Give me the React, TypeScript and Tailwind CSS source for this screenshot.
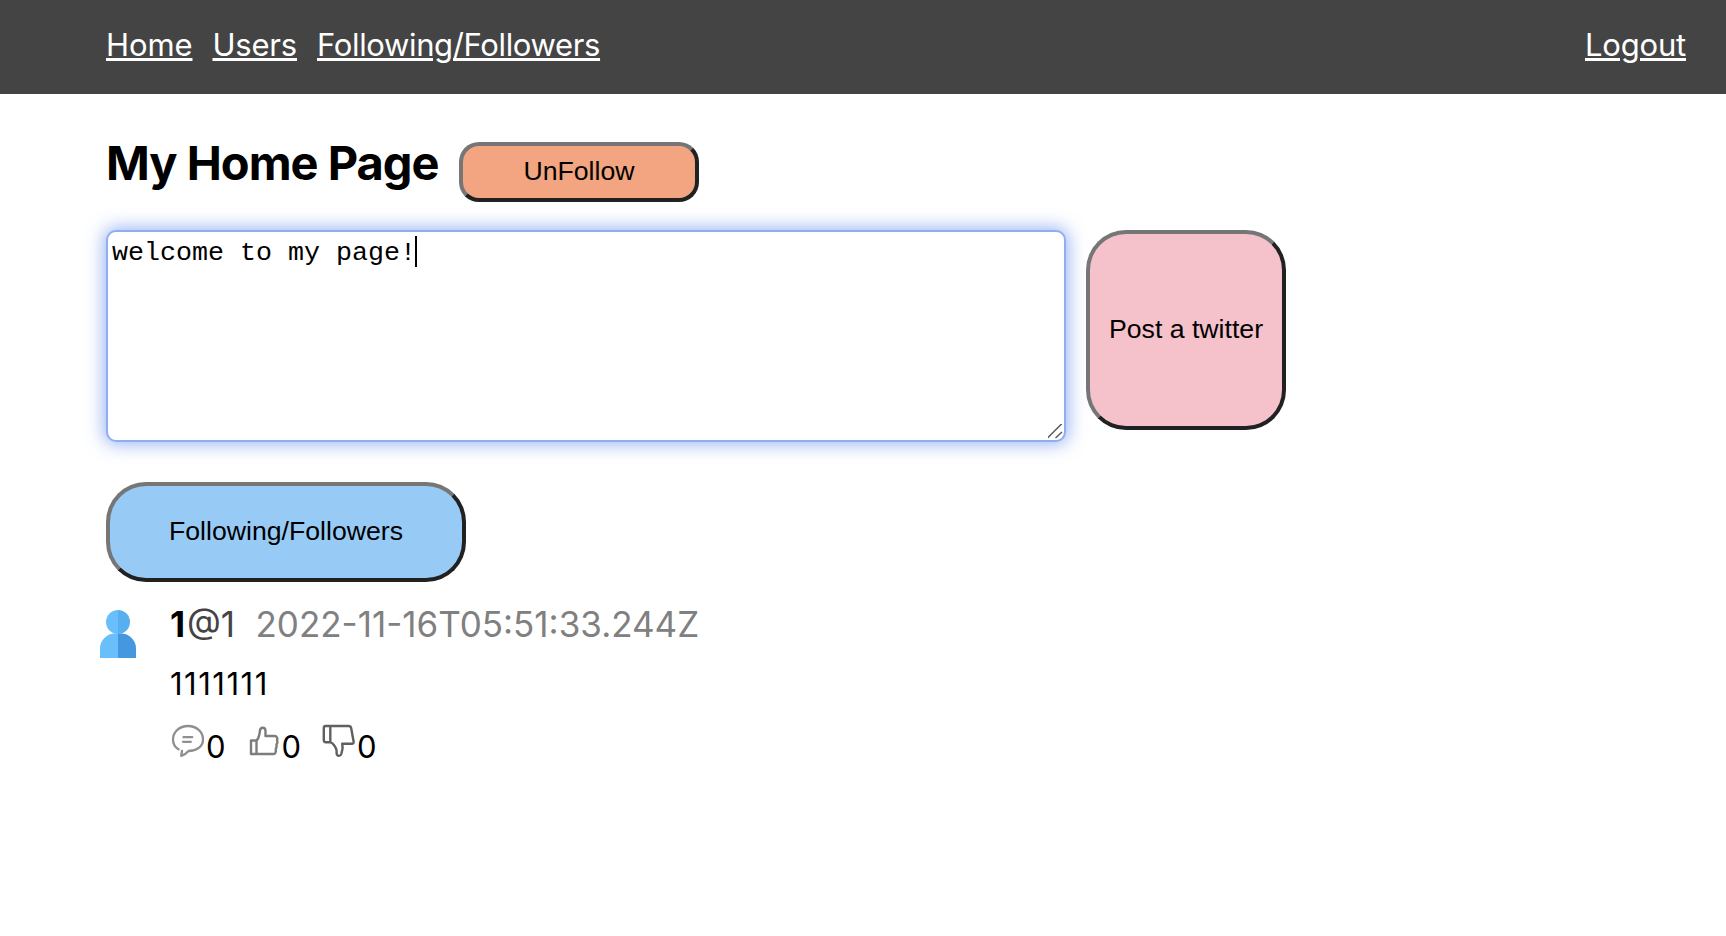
import type { ReactNode } from "react";

function NavLink({ children, className }: { children: ReactNode; className: string }) {
  return (
    <a
      href="#"
      className={`whitespace-nowrap text-[31px] leading-[38px] text-white underline decoration-[3px] underline-offset-2 ${className}`}
    >
      {children}
    </a>
  );
}

function Raised({ children, className }: { children: ReactNode; className: string }) {
  return (
    <button
      type="button"
      className={`flex shrink-0 items-center justify-center whitespace-nowrap border-4 border-t-[#767676] border-l-[#767676] border-r-[#212121] border-b-[#212121] pb-[2px] font-['Liberation_Sans',Arial,sans-serif] text-[26.667px] leading-[30px] text-black ${className}`}
    >
      {children}
    </button>
  );
}

function Avatar() {
  return (
    <svg className="block h-[48px] w-[36px]" viewBox="0 0 36 48">
      <path d="M0 48V38.500A15 15 0 0 1 15 23.500H18V48Z" fill="#68bffb" />
      <path d="M18 48V23.500H21A15 15 0 0 1 36 38.500V48Z" fill="#4598e0" />
      <path d="M18 0A12 12 0 0 0 18 24Z" fill="#68bffb" />
      <path d="M18 0A12 12 0 0 1 18 24Z" fill="#58aff0" />
    </svg>
  );
}

function CommentIcon() {
  return (
    <svg className="block h-[34px] w-[34px]" viewBox="0 0 34 34" fill="none" stroke="#8f8f8f" strokeWidth="2.300" strokeLinecap="round" strokeLinejoin="round">
      <path d="M8.500 25.300C5 23 3 19.500 3 15.400C3 7.800 9.600 2 18 2C26.400 2 33 7.800 33 15.400C33 22.600 26.500 26.800 18.500 27C16.500 29.500 14 31 11.200 31.800L12 26.800" />
      <path d="M13.500 13.200H22.200M13 17.800H20.800" />
    </svg>
  );
}

function ThumbUpIcon() {
  return (
    <svg className="block h-[34px] w-[34px]" viewBox="0 0 34 34" fill="none" stroke="#7d7d7d" strokeWidth="2.400" strokeLinejoin="round">
      <path d="M5 16.500H10.500V30H5ZM10.500 16.500C12.800 14.500 13.500 11 14 6.500C14.500 2.800 19.500 2.800 19.500 7V12H28.500C31 12 31.800 14.500 31 16.200C31.600 17.500 31.200 19.500 30.400 20.500C30.800 22 30.600 23.500 29.800 24.800C30 28 29.600 30 27.500 30H10.500" />
    </svg>
  );
}

function ThumbDownIcon() {
  return (
    <svg className="block h-[34px] w-[34px]" viewBox="0 0 34 34" fill="none" stroke="#606060" strokeWidth="2.400" strokeLinejoin="round">
      <path d="M9.300 2H4.500Q2.800 2 2.800 4V16Q2.800 18.200 4.800 18.200H9.300ZM9.300 2H27.500Q29.700 2 30.200 4.200L32.600 17.500Q32.900 19.800 30.800 19.800H21.200L21.600 23.500Q21.500 26 20.700 28L20.300 30Q19.800 31.800 18 31.800Q15.800 31.800 15.600 29.500V27Q15.200 24 13.300 21.500Q11.500 19 9.300 18.200" />
    </svg>
  );
}

function Stat({ icon, value }: { icon: ReactNode; value: string }) {
  return (
    <div className="flex w-[75.500px] items-start">
      {icon}
      <span className="pt-[4px] pl-[2px] text-[31px] leading-[38px]">{value}</span>
    </div>
  );
}

export default function App() {
  return (
    <div className="min-h-[936px] bg-white font-['Inter',sans-serif] text-black">
      <nav className="flex h-[94px] items-start justify-between bg-[#444] pt-[26px] pr-10 pl-[106px]">
        <div className="flex gap-5">
          <NavLink className="tracking-[-0.100px]">Home</NavLink>
          <NavLink className="tracking-[-0.200px]">Users</NavLink>
          <NavLink className="tracking-[-0.350px]">Following/Followers</NavLink>
        </div>
        <NavLink className="tracking-[-0.200px]">Logout</NavLink>
      </nav>

      <main className="pl-[106px]">
        <div className="flex h-[136px] items-start gap-5 pt-12">
          <h1 className="mt-[-8px] w-[333px] whitespace-nowrap text-[47px] leading-[58px] font-bold tracking-[-1px]">My Home Page</h1>
          <Raised className="h-[60px] w-[240px] rounded-[20px] bg-[#f2a580]">UnFollow</Raised>
        </div>

        <div className="flex items-start gap-5">
          <div className="flex h-[212px] w-[960px] flex-col justify-between rounded-[10px] border-2 border-[#8faef2] bg-white shadow-[0_0_18px_2px_rgba(80,125,235,0.600)]">
            <div className="flex pt-1 pl-1">
              <span className="pt-[2px] font-['Liberation_Mono','Courier_New',monospace] text-[26.667px] leading-[31px]">welcome to my page!</span>
              <span className="-ml-px h-[31px] w-[2px] bg-black" />
            </div>
            <svg className="h-[16px] w-[16px] self-end" viewBox="0 0 16 16" fill="none" stroke="#555" strokeWidth="1.400">
              <path d="M-.5 14L14 -.5M7.500 14L14 8" />
            </svg>
          </div>
          <Raised className="h-[200px] w-[200px] rounded-[40px] bg-[#f5c2cc]">Post a twitter</Raised>
        </div>

        <Raised className="mt-10 h-[100px] w-[360px] rounded-[40px] bg-[#97cbf6]">Following/Followers</Raised>

        <article className="ml-[-6px] flex pt-[27px]">
          <div className="pt-px">
            <Avatar />
          </div>
          <div className="pl-[34px]">
            <div className="mt-[-6px] flex items-baseline text-[35px] leading-[42px]">
              <strong className="w-[17px] font-bold">1</strong>
              <span className="w-[68.500px] text-[#444]">@1</span>
              <time className="text-[#808080]">2022-11-16T05:51:33.244Z</time>
            </div>
            <p className="mt-5 text-[31px] leading-[38px] tracking-[1.500px]">1111111</p>
            <div className="mt-[21px] flex">
              <Stat icon={<CommentIcon />} value="0" />
              <Stat icon={<ThumbUpIcon />} value="0" />
              <Stat icon={<ThumbDownIcon />} value="0" />
            </div>
          </div>
        </article>
      </main>
    </div>
  );
}
